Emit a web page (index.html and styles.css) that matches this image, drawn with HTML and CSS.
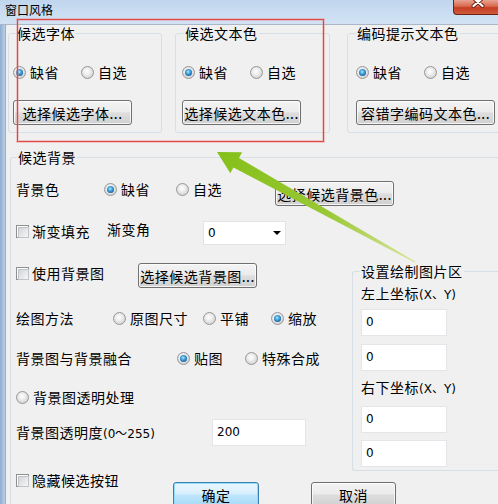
FILE: index.html
```html
<!DOCTYPE html>
<html lang="zh-CN">
<head>
<meta charset="utf-8">
<title>窗口风格</title>
<link rel="stylesheet" href="styles.css">
</head>
<body>
<div class="window">
  <div class="titlebar">
    <span class="title">窗口风格</span>
    <span class="close"><svg width="45" height="15" viewBox="0 0 45 15"><path d="M20.5 -1 L29.5 7 M29.5 -1 L20.5 7" stroke="#6b2213" stroke-width="4" stroke-linecap="round"/><path d="M20.5 -1 L29.5 7 M29.5 -1 L20.5 7" stroke="#ffffff" stroke-width="2.2" stroke-linecap="round"/></svg></span>
  </div>
  <div class="client">
    <div class="frame-edge"></div>
    <div class="main">
      <div class="top-row">
        <fieldset class="group g1">
          <legend>候选字体</legend>
          <div class="radio-row">
            <span class="opt"><span class="radio on"></span>缺省</span>
            <span class="opt"><span class="radio"></span>自选</span>
          </div>
          <div class="btn w119">选择候选字体...</div>
        </fieldset>
        <fieldset class="group g2">
          <legend>候选文本色</legend>
          <div class="radio-row">
            <span class="opt"><span class="radio on"></span>缺省</span>
            <span class="opt"><span class="radio"></span>自选</span>
          </div>
          <div class="btn w119">选择候选文本色...</div>
        </fieldset>
        <fieldset class="group g3">
          <legend>编码提示文本色</legend>
          <div class="radio-row">
            <span class="opt"><span class="radio on"></span>缺省</span>
            <span class="opt"><span class="radio"></span>自选</span>
          </div>
          <div class="btn w139">容错字编码文本色...</div>
        </fieldset>
      </div>

      <fieldset class="bg-group">
        <legend>候选背景</legend>
        <div class="row row-a">
          <span class="lbl w88">背景色</span>
          <span class="opt w72"><span class="radio on"></span>缺省</span>
          <span class="opt w99"><span class="radio"></span>自选</span>
          <div class="btn w119 mt2">选择候选背景色...</div>
        </div>
        <div class="row row-b">
          <span class="opt w91"><span class="chk"></span>渐变填充</span>
          <span class="lbl w96 up2">渐变角</span>
          <div class="combo"><span>0</span><span class="caret"></span></div>
        </div>
        <div class="split">
          <div class="left-col">
            <div class="row row-c">
              <span class="opt w122"><span class="chk"></span>使用背景图</span>
              <div class="btn w119">选择候选背景图...</div>
            </div>
            <div class="row row-d">
              <span class="lbl w97">绘图方法</span>
              <span class="opt w90"><span class="radio"></span>原图尺寸</span>
              <span class="opt w68"><span class="radio"></span>平铺</span>
              <span class="opt"><span class="radio on"></span>缩放</span>
            </div>
            <div class="row row-e">
              <span class="lbl w161">背景图与背景融合</span>
              <span class="opt w68"><span class="radio on"></span>贴图</span>
              <span class="opt"><span class="radio"></span>特殊合成</span>
            </div>
            <div class="row row-f">
              <span class="opt"><span class="radio"></span>背景图透明处理</span>
            </div>
            <div class="row row-g">
              <span class="lbl w196">背景图透明度<span class="lat">(0～255)</span></span>
              <div class="field w94">200</div>
            </div>
          </div>
          <fieldset class="area-group">
            <legend>设置绘制图片区</legend>
            <div class="coord-lbl first">左上坐标<span class="lat">(X、Y)</span></div>
            <div class="field w86 f1">0</div>
            <div class="field w86 f2">0</div>
            <div class="coord-lbl second">右下坐标<span class="lat">(X、Y)</span></div>
            <div class="field w86 f3">0</div>
            <div class="field w86 f3">0</div>
          </fieldset>
        </div>
        <div class="row row-h">
          <span class="opt w157"><span class="chk"></span>隐藏候选按钮</span>
          <div class="btn default w86 mt12">确定</div>
          <div class="btn w85 mt12 ml52">取消</div>
        </div>
      </fieldset>
    </div>
  </div>
</div>

<div class="annot-rect"></div>
<svg class="arrow" width="498" height="504" viewBox="0 0 498 504">
  <defs>
    <linearGradient id="ag" x1="217" y1="152" x2="415" y2="262" gradientUnits="userSpaceOnUse">
      <stop offset="0" stop-color="#85c01a"/>
      <stop offset="0.55" stop-color="#98c834"/>
      <stop offset="1" stop-color="#d9e59c"/>
    </linearGradient>
  </defs>
  <polygon points="217,152 242.1,152.2 239,157.9 415.3,261.4 414.7,262.6 233.4,167.5 230.3,173.2" fill="url(#ag)"/>
</svg>
</body>
</html>
```

FILE: styles.css
```css
* { box-sizing: border-box; }
html, body { margin: 0; padding: 0; }
body {
  width: 498px;
  height: 504px;
  overflow: hidden;
  position: relative;
  background: #f0f0f0;
  font-family: "Noto Sans CJK SC", "Microsoft YaHei", sans-serif;
  font-size: 14px;
  letter-spacing: 0.5px;
  color: #000;
}

/* title bar */
.titlebar {
  height: 24px;
  display: flex;
  align-items: flex-start;
  background: linear-gradient(#c0d6ee, #d2e2f4);
}
.title {
  font-size: 12px;
  line-height: 14px;
  margin: 3px 0 0 5px;
  letter-spacing: 0;
  color: #000;
}
.close {
  margin-left: auto;
  width: 45px;
  height: 15px;
  display: block;
  background: linear-gradient(#e9a493 0%, #d9684c 45%, #c53e22 55%, #cf5a3a 100%);
  border: 1px solid #6e2415;
  border-top: none;
  border-right: none;
  border-radius: 0 0 0 4px;
  overflow: hidden;
}
.close svg { display: block; margin: -1px 0 0 -1px; }

/* client */
.client {
  display: flex;
  height: 480px;
  border-top: 1px solid #a9b7c6;
}
.frame-edge {
  width: 5px;
  flex: none;
  background: linear-gradient(to right, #8eabcf, #bcd0e8);
}
.main {
  flex: 1;
  min-width: 0;
  border-left: 1px solid #9fadbd;
}

/* group boxes */
fieldset {
  margin: 0;
  padding: 0;
  min-width: 0;
  border: 1px solid #d5dfe5;
  border-radius: 3px;
  flex-shrink: 0;
}
legend {
  padding: 0 1px;
  font-size: 14px;
  line-height: 16px;
}

.top-row {
  display: flex;
  align-items: flex-start;
}
.group { height: 108px; }
.g1 { margin-left: 2px; width: 154px; padding-left: 4px; }
.g1 legend { margin-left: 3px; }
.g2 { margin-left: 13px; width: 155px; padding-left: 6px; }
.g2 legend { margin-left: 2px; }
.g3 { margin-left: 17px; width: 160px; padding-left: 8px; }
.g3 legend { margin-left: 0; }

.radio-row {
  display: flex;
  height: 20px;
  margin-top: 21px;
}
.group .btn { margin-top: 18px; }

/* options */
.opt {
  display: flex;
  align-items: center;
  line-height: 20px;
  height: 20px;
  width: 68px;
  white-space: nowrap;
  flex: none;
}
.row .opt { width: auto; }
.lbl {
  display: block;
  line-height: 20px;
  white-space: nowrap;
  flex: none;
}
.lat {
  font-family: "DejaVu Sans", "Liberation Sans", sans-serif;
  font-size: 12px;
  letter-spacing: 0;
}

.radio {
  width: 13px;
  height: 13px;
  flex: none;
  margin-right: 4px;
  border-radius: 50%;
  border: 1px solid #979797;
  background: radial-gradient(circle at 45% 40%, #ffffff 0%, #eeeeee 35%, #d4d4d4 75%, #c4c4c4 100%);
  position: relative;
}
.radio.on::after {
  content: "";
  position: absolute;
  left: 2px;
  top: 2px;
  width: 7px;
  height: 7px;
  border-radius: 50%;
  background: radial-gradient(circle at 45% 40%, #b4e8fc 0%, #45a6dc 35%, #1d6aa8 70%, #123f6c 100%);
}
.chk {
  width: 13px;
  height: 13px;
  flex: none;
  margin-right: 3px;
  border: 1px solid #8e8f8f;
  background: #fff;
  position: relative;
}
.chk::after {
  content: "";
  position: absolute;
  left: 1px;
  top: 1px;
  width: 9px;
  height: 9px;
  border: 1px solid #c0c3c8;
  background: linear-gradient(135deg, #d2d5d9, #f7f7f7);
}

/* buttons */
.btn {
  display: flex;
  align-items: center;
  justify-content: center;
  height: 25px;
  line-height: 20px;
  white-space: nowrap;
  flex: none;
  border: 1px solid #707070;
  border-radius: 3px;
  background: linear-gradient(#f3f3f3 0%, #ececec 46%, #dedede 52%, #d0d0d0 100%);
  box-shadow: inset 0 0 0 1px rgba(255, 255, 255, 0.75);
}
.btn.default {
  border-color: #3c7fb1;
  background: linear-gradient(#eaf6fd 0%, #d9f0fc 46%, #bee6fd 52%, #a7d9f5 100%);
  box-shadow: inset 0 0 0 1px #8fdcfb;
}

/* widths */
.w68 { width: 68px; }
.row .w68 { width: 68px; }
.row .w72 { width: 72px; }
.w88 { width: 88px; }
.w86 { width: 86px; }
.w85 { width: 85px; }
.row .w90 { width: 90px; }
.row .w91 { width: 91px; }
.w94 { width: 94px; }
.w96 { width: 96px; }
.w97 { width: 97px; }
.row .w99 { width: 99px; }
.w119 { width: 119px; }
.row .w122 { width: 122px; }
.w139 { width: 139px; }
.row .w157 { width: 157px; }
.w161 { width: 161px; }
.w196 { width: 196px; }
.mt2 { margin-top: 2px; }
.mt12 { margin-top: 12px; }
.ml52 { margin-left: 52px; }
.up2 { margin-top: -2px; }

/* background group */
.bg-group {
  margin: 16px 0 0 4px;
  padding: 0 0 0 5px;
  height: 420px;
  border-right: none;
  border-bottom: none;
  border-radius: 3px 0 0 0;
}
.bg-group > legend { margin-left: 1px; }

.row {
  display: flex;
  align-items: flex-start;
}
.row-a { height: 42px; margin-top: 14px; }
.row-b { height: 42px; }
.row-c { height: 45px; }
.row-d { height: 40px; }
.row-e { height: 39px; }
.row-f { height: 32px; }
.row-g { height: 27px; align-items: center; }
.row-h { height: 40px; }

.combo {
  width: 83px;
  height: 24px;
  flex: none;
  display: flex;
  align-items: center;
  padding-left: 4px;
  background: #fff;
  border: 1px solid #e1e3e6;
  font-family: "DejaVu Sans", "Liberation Sans", sans-serif;
  font-size: 12px;
  letter-spacing: 0;
}
.caret {
  margin-left: auto;
  margin-right: 4px;
  width: 0;
  height: 0;
  border-left: 4px solid transparent;
  border-right: 4px solid transparent;
  border-top: 4px solid #000;
}

.split {
  display: flex;
  align-items: flex-start;
  height: 207px;
}
.left-col {
  width: 336px;
  flex: none;
}

.field {
  height: 27px;
  flex: none;
  display: flex;
  align-items: center;
  padding-left: 4px;
  padding-bottom: 2px;
  background: #fff;
  border: 1px solid #e3e5e8;
  font-family: "DejaVu Sans", "Liberation Sans", sans-serif;
  font-size: 12px;
  letter-spacing: 0;
}

.area-group {
  width: 160px;
  height: 208px;
  padding-left: 8px;
  border-right: none;
  border-radius: 3px 0 0 3px;
}
.area-group > legend { margin-left: -1px; }
.coord-lbl {
  line-height: 20px;
  white-space: nowrap;
}
.coord-lbl.first { margin-top: 4px; }
.coord-lbl.second { margin-top: 6px; }
.f1 { margin-top: 4px; }
.f2 { margin-top: 8px; }
.f3 { margin-top: 7px; }

/* annotation overlays */
.annot-rect {
  position: absolute;
  left: 17px;
  top: 19px;
  width: 307px;
  height: 123px;
  border: 1px solid #e04848;
  box-shadow: 0 0 0 1px rgba(235, 120, 120, 0.35), inset 0 0 0 1px rgba(235, 120, 120, 0.35);
  pointer-events: none;
}
.arrow {
  position: absolute;
  left: 0;
  top: 0;
  pointer-events: none;
}
```
